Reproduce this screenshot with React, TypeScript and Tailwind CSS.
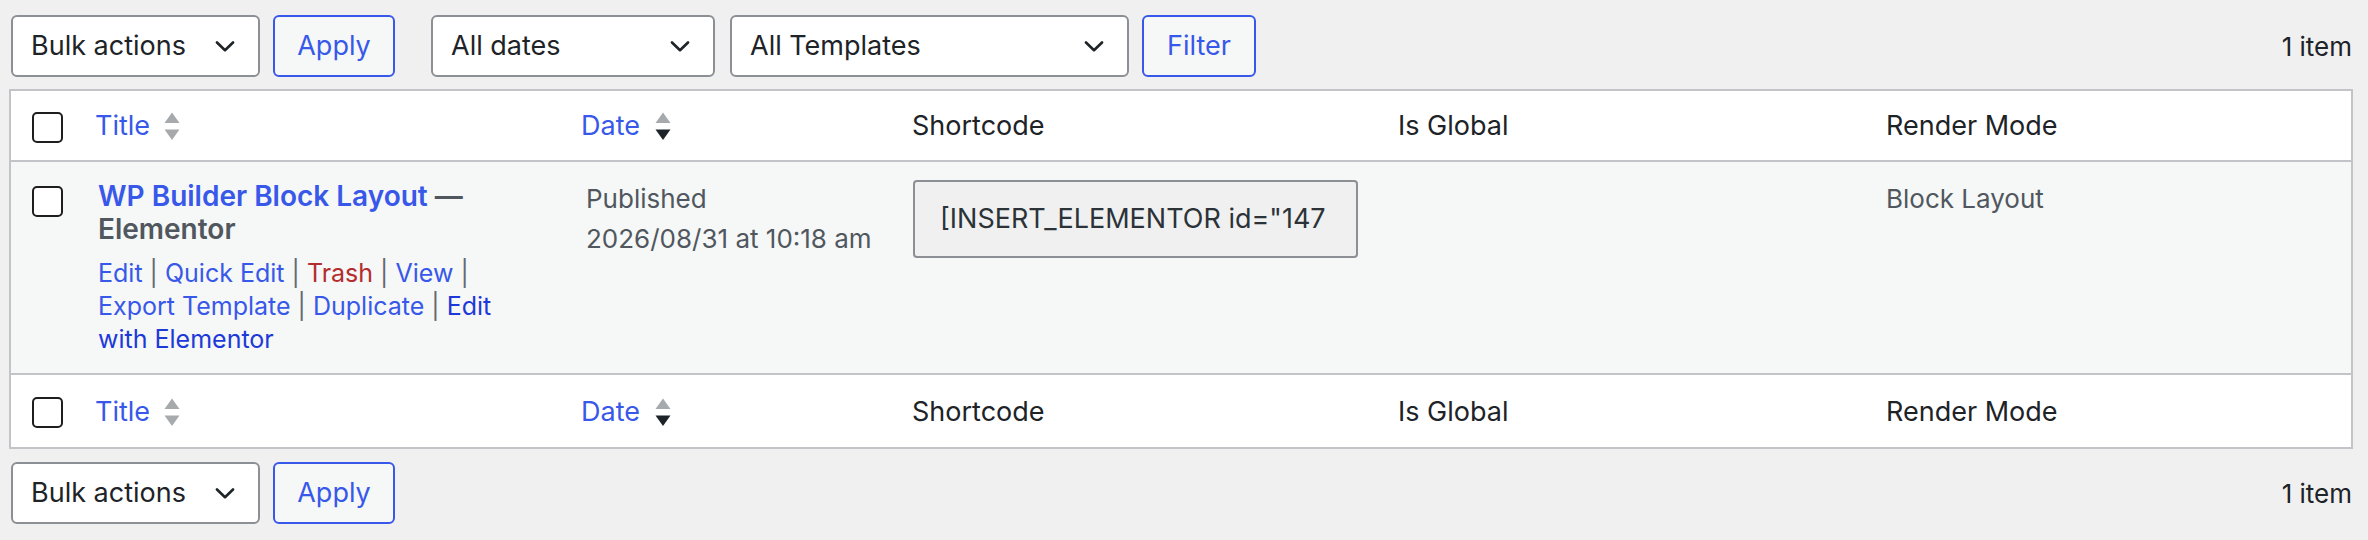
import React from "react";

const FONT = { fontFamily: "Inter, 'Noto Sans', 'Liberation Sans', sans-serif" };

function Chevron() {
  return (
    <svg width="20" height="11" viewBox="0 0 20 11" fill="none">
      <path d="M2 1.5 L10 9.2 L18 1.5" stroke="#1d2327" strokeWidth="2.6" strokeLinecap="round" strokeLinejoin="round" />
    </svg>
  );
}

function SortArrows({ desc }: { desc?: boolean }) {
  return (
    <svg width="16" height="29" viewBox="0 0 16 29" className="shrink-0">
      <path d="M8 0.5 L15.5 11 L0.5 11 Z" fill="#a7aaad" />
      <path d="M0.5 17.5 L15.5 17.5 L8 28 Z" fill={desc ? "#1d2327" : "#a7aaad"} />
    </svg>
  );
}

function Select({ label, width }: { label: string; width: string }) {
  return (
    <div
      className={`${width} h-[62px] shrink-0 flex items-center justify-between pl-[18px] pr-[23px] bg-white border-2 border-[#8c8f94] rounded-[6px] text-[27px] text-[#1d2327]`}
    >
      <span>{label}</span>
      <Chevron />
    </div>
  );
}

function Button({ label, width }: { label: string; width: string }) {
  return (
    <div
      className={`${width} h-[62px] shrink-0 flex items-center justify-center bg-[#f6f7f7] border-2 border-[#3858e9] rounded-[6px] text-[27px] text-[#3858e9]`}
    >
      {label}
    </div>
  );
}

function Checkbox() {
  return <div className="w-[31px] h-[31px] border-2 border-[#1e1e1e] rounded-[5px] bg-white" />;
}

const COLS = "grid grid-cols-[69px_486px_327px_486px_488px_484px]";

function HeaderRow({ bottom }: { bottom?: boolean }) {
  return (
    <div className={`${COLS} ${bottom ? "h-[72px]" : "h-[71px] border-b-2 border-[#c3c4c7]"} bg-white items-center text-[27px] text-[#1d2327]`}>
      <div className="pl-[21px] pt-[3px]">
        <Checkbox />
      </div>
      <div className="pl-[15px] pt-[2px] flex items-center gap-[14px]">
        <span className="text-[#3858e9]">Title</span>
        <SortArrows />
      </div>
      <div className="pl-[15px] pt-[2px] flex items-center gap-[15px]">
        <span className="text-[#3858e9]">Date</span>
        <SortArrows desc />
      </div>
      <div className="pl-[19px] pt-[2px]">Shortcode</div>
      <div className="pl-[19px] pt-[2px]">Is Global</div>
      <div className="pl-[19px] pt-[2px]">Render Mode</div>
    </div>
  );
}

function Sep() {
  return <span className="text-[#646970]"> | </span>;
}

function BodyRow() {
  return (
    <div className={`${COLS} h-[213px] bg-[#f6f7f7] border-b-2 border-[#c3c4c7] items-start`}>
      <div className="pl-[21px] pt-[24px]">
        <Checkbox />
      </div>
      <div className="pl-[18px] pt-[18px]">
        <div className="text-[28px] leading-[33px] font-semibold text-[#50575e]">
          <div>
            <span className="text-[#3858e9]">WP Builder Block Layout</span> —
          </div>
          <div>Elementor</div>
        </div>
        <div className="mt-[11px] text-[25px] leading-[33px] text-[#3858e9]">
          <div>
            Edit<Sep />Quick Edit<Sep />
            <span className="text-[#b32d2e]">Trash</span>
            <Sep />View<Sep />
          </div>
          <div>
            Export Template<Sep />Duplicate<Sep />
            <span className="text-[#1d3ad8]">Edit</span>
          </div>
          <div className="text-[#1d3ad8]">with Elementor</div>
        </div>
      </div>
      <div className="pl-[20px] pt-[17px] text-[26px] leading-[40px] text-[#50575e]">
        <div>Published</div>
        <div>2026/08/31 at 10:18 am</div>
      </div>
      <div className="pl-[20px] pt-[18px]">
        <div className="w-[445px] h-[78px] flex items-center bg-[#f0f0f1] border-2 border-[#8c8f94] rounded-[4px] pl-[25px] pr-[18px] text-[27px] text-[#2c3338]">
          <div className="overflow-hidden whitespace-nowrap w-full">[INSERT_ELEMENTOR id="147</div>
        </div>
      </div>
      <div />
      <div className="pl-[19px] pt-[17px] text-[26px] leading-[40px] text-[#50575e]">Block Layout</div>
    </div>
  );
}

function Toolbar({ filters }: { filters?: boolean }) {
  return (
    <div className="h-[62px] flex items-center pl-[11px] pr-[16px]">
      <Select label="Bulk actions" width="w-[249px]" />
      <div className="ml-[13px]">
        <Button label="Apply" width="w-[122px]" />
      </div>
      {filters && (
        <>
          <div className="ml-[36px]">
            <Select label="All dates" width="w-[284px]" />
          </div>
          <div className="ml-[15px]">
            <Select label="All Templates" width="w-[399px]" />
          </div>
          <div className="ml-[13px]">
            <Button label="Filter" width="w-[114px]" />
          </div>
        </>
      )}
      <div className="ml-auto text-[26px] text-[#1d2327]">1 item</div>
    </div>
  );
}

export default function App() {
  return (
    <div className="w-[2368px] h-[540px] bg-[#f0f0f1] pt-[15px] overflow-hidden" style={FONT}>
      <Toolbar filters />
      <div className="mt-[12px] ml-[9px] mr-[15px] border-2 border-[#c3c4c7]">
        <HeaderRow />
        <BodyRow />
        <HeaderRow bottom />
      </div>
      <div className="mt-[13px]">
        <Toolbar />
      </div>
    </div>
  );
}
